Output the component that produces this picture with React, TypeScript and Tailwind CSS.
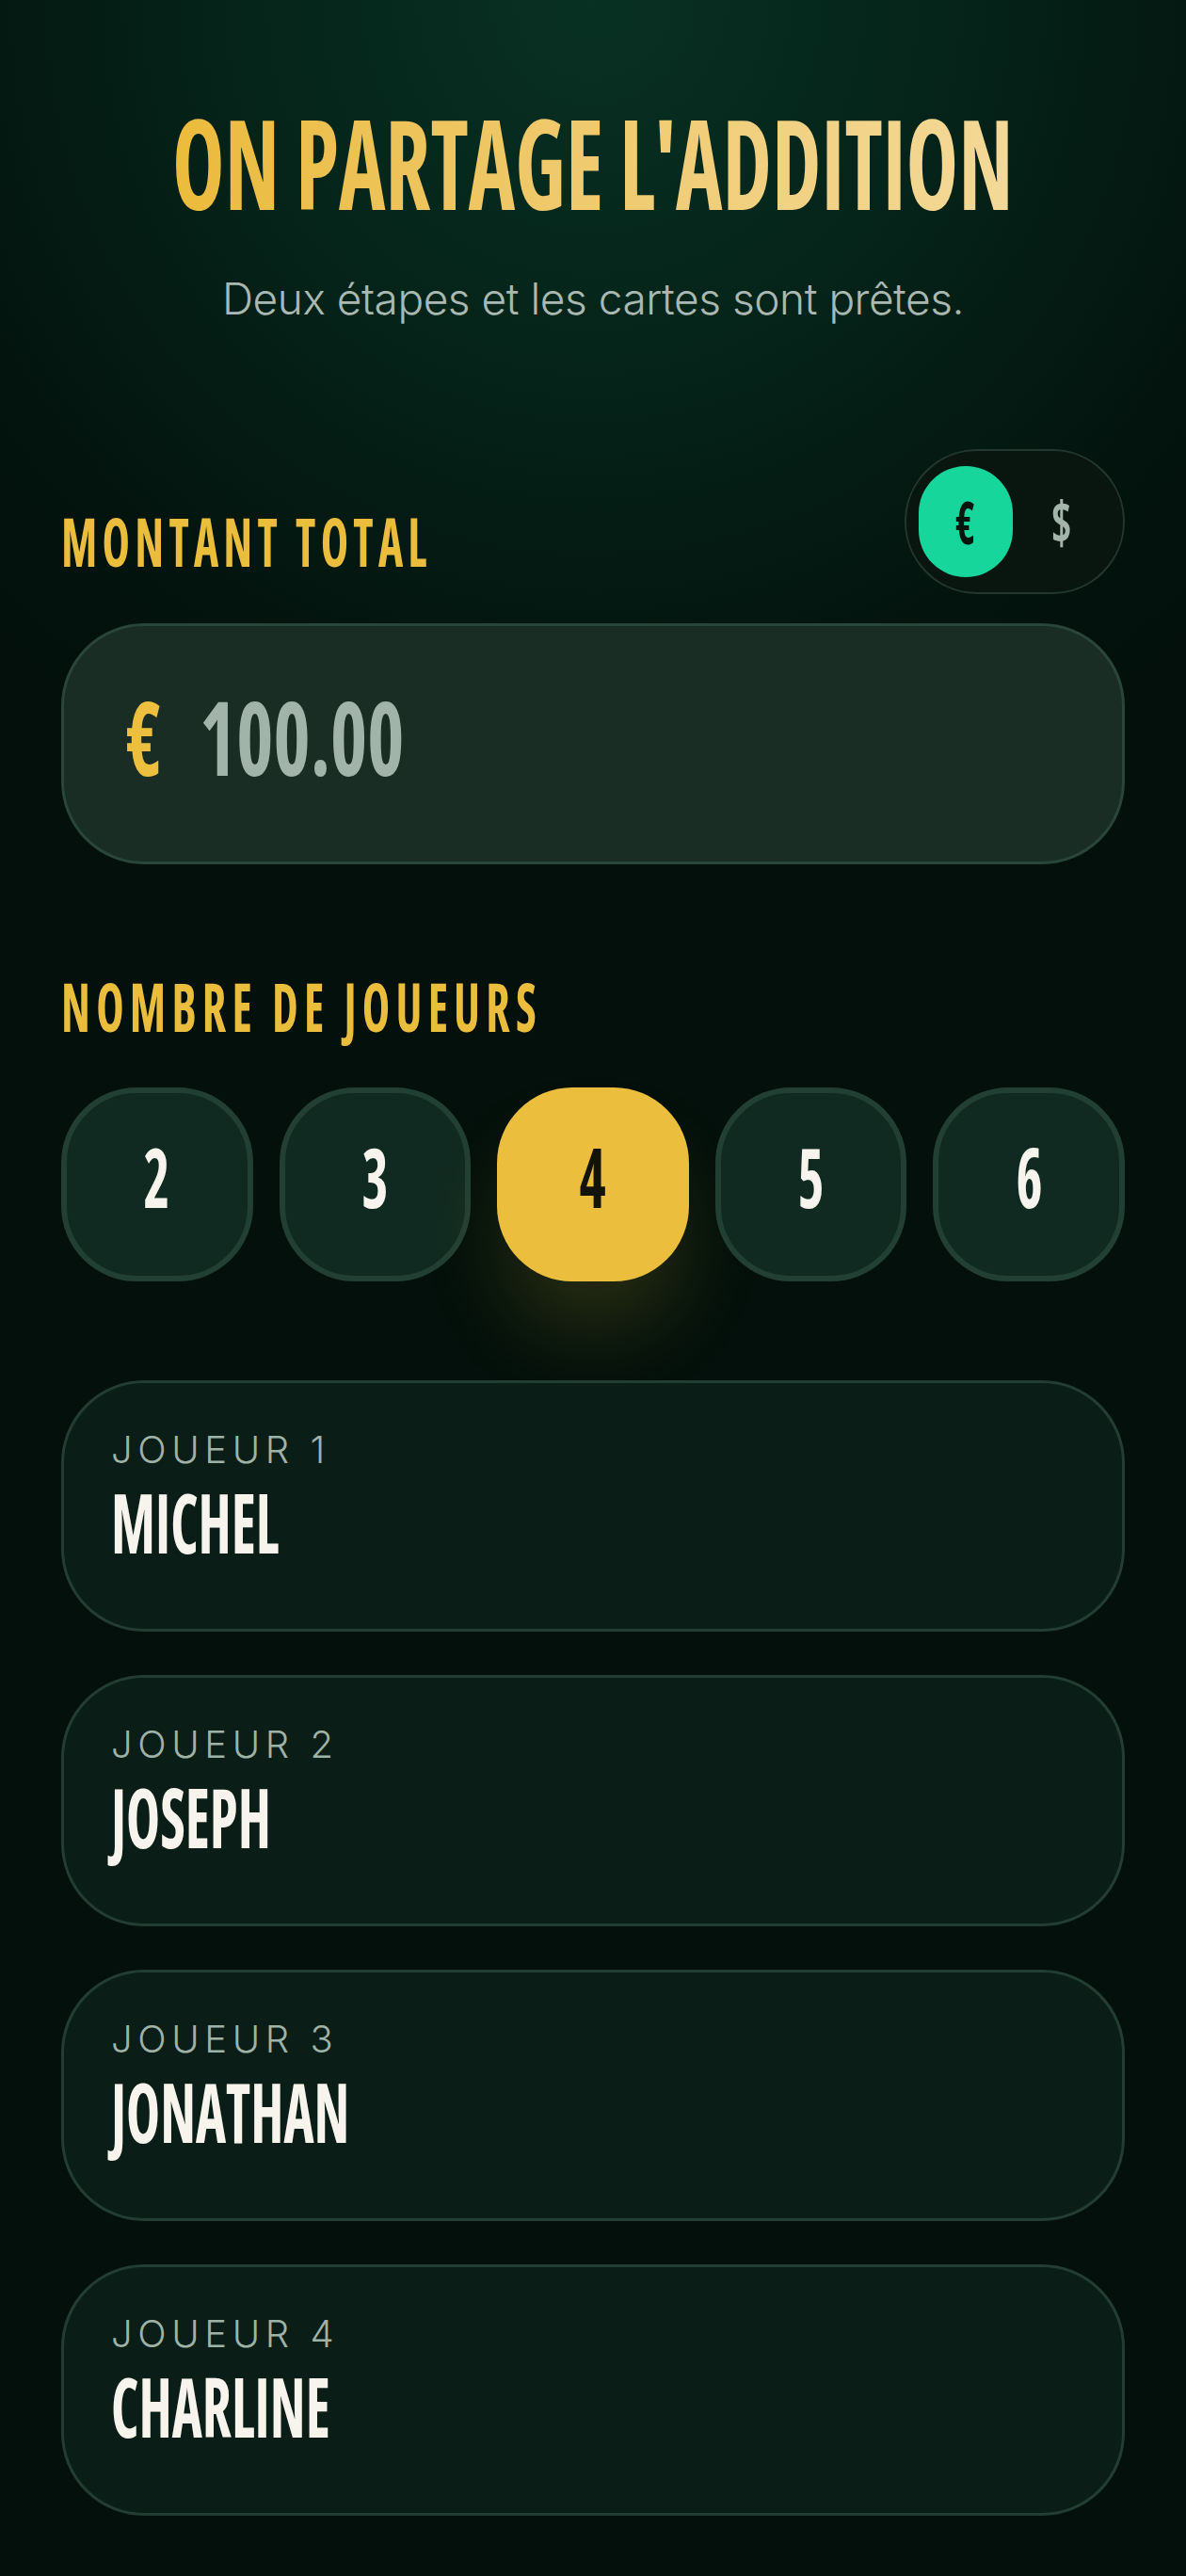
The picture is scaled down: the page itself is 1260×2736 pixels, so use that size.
const cond = "font-['Open_Sans',sans-serif] font-stretch-condensed font-bold whitespace-nowrap";

const players = [
  { n: 1, name: "MICHEL" },
  { n: 2, name: "JOSEPH" },
  { n: 3, name: "JONATHAN" },
  { n: 4, name: "CHARLINE" },
];

export default function App() {
  return (
    <div className="min-h-[2736px] w-full bg-[#03100b] bg-[radial-gradient(ellipse_75%_35%_at_50%_0%,#083123_0%,#052218_45%,#03130d_80%,#03100b_100%)]">
      <div className="flex flex-col px-[65px] pb-[60px] pt-[105px]">
        {/* Title */}
        <div className="flex justify-center">
          <h1
            className={`${cond} inline-block origin-center scale-x-[0.706] bg-linear-to-r from-[#ebbb3a] to-[#f3d998] bg-clip-text text-[133px] leading-none text-transparent`}
          >
            ON PARTAGE L'ADDITION
          </h1>
        </div>
        <p className="mt-[56px] text-center font-['Inter',sans-serif] text-[46px] font-light leading-none tracking-[-0.01em] text-[#a9b9b1]">
          Deux étapes et les cartes sont prêtes.
        </p>

        {/* Montant total row */}
        <div className="mt-[137px] flex items-end justify-between">
          <div className="pb-[21px]">
            <span
              className={`${cond} inline-block origin-left scale-x-[0.7] text-[71px] leading-none tracking-[0.105em] text-[#ebbd3c]`}
            >
              MONTANT TOTAL
            </span>
          </div>
          <div className="flex h-[154px] items-center rounded-full border-2 border-[#22382f] bg-[#08160f] px-[13px]">
            <div className="flex h-[118px] w-[100px] items-center justify-center rounded-full bg-[#16d69c]">
              <span className={`${cond} inline-block scale-x-[0.7] text-[62px] leading-none text-[#06140e]`}>€</span>
            </div>
            <div className="flex h-[118px] w-[104px] items-center justify-center">
              <span className={`${cond} inline-block scale-x-[0.75] text-[62px] leading-none text-[#a3b4aa]`}>$</span>
            </div>
          </div>
        </div>

        {/* Amount */}
        <div className="mt-[31px] flex h-[256px] items-center rounded-[88px] border-[3px] border-[#2a4539] bg-[#1a2d25] pb-[18px] pl-[66px]">
          <span className={`${cond} inline-block origin-left scale-x-[0.72] text-[110px] leading-none text-[#ecbf3f]`}>€</span>
          <span className={`${cond} ml-[26px] inline-block origin-left scale-x-[0.76] text-[110px] leading-none text-[#a2b3aa]`}>100.00</span>
        </div>

        {/* Nombre de joueurs */}
        <div className="mt-[115px]">
          <span
            className={`${cond} inline-block origin-left scale-x-[0.7] text-[71px] leading-none tracking-[0.125em] text-[#ebbd3c]`}
          >
            NOMBRE DE JOUEURS
          </span>
        </div>

        <div className="mt-[51px] grid grid-cols-5 gap-[28px]">
          {[2, 3, 4, 5, 6].map((n) =>
            n === 4 ? (
              <div
                key={n}
                className="flex h-[206px] items-center justify-center rounded-[80px] bg-[#ecbe3e] pb-[19px] shadow-[0_60px_90px_-10px_rgba(236,190,62,0.16)]"
              >
                <span className={`${cond} inline-block scale-x-[0.68] text-[88px] leading-none text-[#14130a]`}>4</span>
              </div>
            ) : (
              <div
                key={n}
                className="flex h-[206px] items-center justify-center rounded-[80px] border-[6px] border-[#223f34] bg-[#112a21] pb-[19px]"
              >
                <span className={`${cond} inline-block scale-x-[0.68] text-[88px] leading-none text-[#f6f4ec]`}>{n}</span>
              </div>
            )
          )}
        </div>

        {/* Players */}
        <div className="mt-[105px] flex flex-col gap-[46px]">
          {players.map((p) => (
            <div
              key={p.n}
              className="flex h-[267px] flex-col rounded-[88px] border-[3px] border-[#243d33] bg-[#0a1d16] pl-[50px] pt-[51px]"
            >
              <span className="font-['Inter',sans-serif] text-[40px] font-light leading-none tracking-[0.14em] text-[#9fb2a8]">
                JOUEUR {p.n}
              </span>
              <span
                className={`${cond} mt-[13px] inline-block origin-left scale-x-[0.7] self-start text-[87px] leading-none text-[#f6f4ec]`}
              >
                {p.name}
              </span>
            </div>
          ))}
        </div>
      </div>
    </div>
  );
}
